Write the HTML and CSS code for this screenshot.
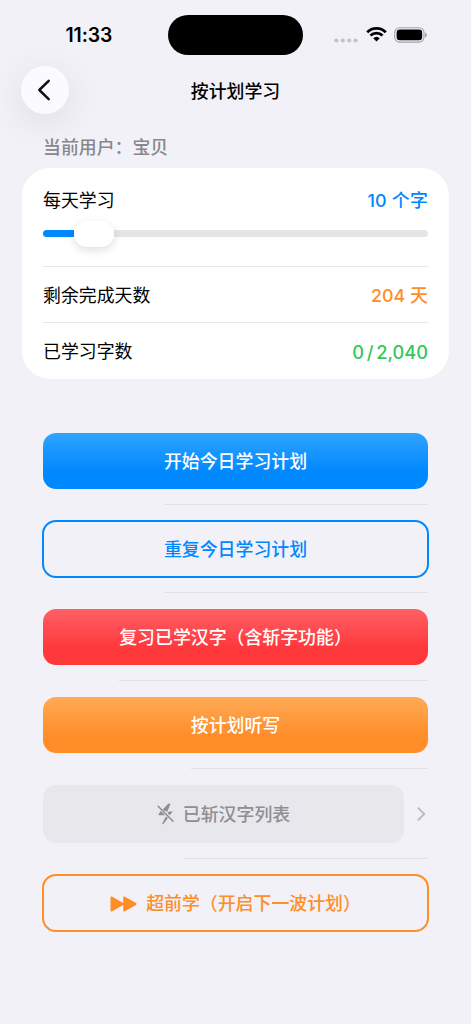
FILE: index.html
```html
<!DOCTYPE html>
<html lang="zh-CN">
<head>
<meta charset="utf-8">
<title>按计划学习</title>
<link rel="stylesheet" href="styles.css">
</head>
<body>
<div class="screen">
  <header class="status">
    <div class="time">11:33</div>
    <div class="island"></div>
    <div class="indicators">
      <svg class="dots" width="24" height="5" viewBox="0 0 24 5" fill="#c2c2c7"><circle cx="2.3" cy="2.5" r="2.1"/><circle cx="8.8" cy="2.5" r="2.1"/><circle cx="15.2" cy="2.5" r="2.1"/><circle cx="21.6" cy="2.5" r="2.1"/></svg>
      <svg class="wifi" width="21" height="16" viewBox="0 0 21 16"><g fill="none" stroke="#000" stroke-width="2.8"><path d="M1.2 6.2a13.2 13.2 0 0 1 18.6 0"/><path d="M4.5 9.6a8.6 8.6 0 0 1 12 0"/></g><path d="M10.5 15.4 7.2 12.3a4.8 4.8 0 0 1 6.6 0Z"/></svg>
      <svg class="battery" width="34" height="16" viewBox="0 0 34 16"><rect x=".7" y=".7" width="29.3" height="14.4" rx="4.8" fill="none" stroke="#a2a2a6" stroke-width="1.1"/><rect x="2.6" y="2.6" width="25.6" height="10.6" rx="3.2"/><path d="M31.2 5.4c2 .8 2 4.2 0 5Z" fill="#96969a"/></svg>
    </div>
  </header>

  <nav class="nav">
    <div class="back"><svg width="14" height="22" viewBox="0 0 14 22"><path d="M11.7 1.9 2.3 11l9.4 9.1" fill="none" stroke="#111" stroke-width="2.5" stroke-linecap="round" stroke-linejoin="round"/></svg></div>
    <h1 class="title">按计划学习</h1>
  </nav>

  <p class="user">当前用户：宝贝</p>

  <section class="card">
    <div class="daily">
      <div class="line"><span>每天学习</span><span class="value blue">10 个字</span></div>
      <div class="slider"><div class="fill"></div><div class="thumb"></div><div class="track"></div></div>
    </div>
    <div class="line row"><span>剩余完成天数</span><span class="value orange">204 天</span></div>
    <div class="line row"><span>已学习字数</span><span class="value green">0 / 2,040</span></div>
  </section>

  <main class="actions">
    <div class="btn solid-blue">开始今日学习计划</div>
    <div class="sep sep-8"></div>
    <div class="btn outline line-blue">重复今日学习计划</div>
    <div class="sep sep-8"></div>
    <div class="btn solid-red">复习已学汉字（含斩字功能）</div>
    <div class="sep sep-13"></div>
    <div class="btn solid-orange">按计划听写</div>
    <div class="sep sep-5"></div>
    <div class="link">
      <div class="btn muted">
        <svg class="bolt" width="18" height="22" viewBox="0 0 18 22"><path fill="#8e8e93" d="M12.2.8 8.1 8.3 5.9 6.2 11.2.8ZM12.4 8.5h3.4L12.8 12.3 10.2 9.7ZM3.8 8 8.2 12.3H2.2c-.8 0-1-.6-.5-1.2ZM9 13.3 10.9 15.2 6.4 20.9c-.7.8-1.5.3-1.1-.6ZM12.2.8c.6-.6 1.3-.2 1 .6L10.4 8.6H9.2L8 7.4Z"/><path d="M1.2 3.3 16 18.3" stroke="#8e8e93" stroke-width="1.5" stroke-linecap="round"/></svg>
        <span>已斩汉字列表</span>
      </div>
      <svg class="chevron" width="9" height="14" viewBox="0 0 9 14"><path d="m1.5 1.3 5.7 5.7-5.7 5.7" fill="none" stroke="#bcbcc1" stroke-width="2" stroke-linecap="round" stroke-linejoin="round"/></svg>
    </div>
    <div class="sep sep-list"></div>
    <div class="btn outline line-orange">
      <svg class="forward" width="27" height="16" viewBox="0 0 27 16" fill="#ff8d28"><path d="M.5 1.7C.5.6 1.4.2 2.3.7L13.2 6.9V1.7c0-1.1.9-1.5 1.8-1L25.7 6.8c1 .6 1 1.8 0 2.4L15 15.3c-.9.5-1.8.1-1.8-1V9.1L2.3 15.3c-.9.5-1.8.1-1.8-1Z"/></svg>
      <span>超前学（开启下一波计划）</span>
    </div>
  </main>
</div>
</body>
</html>
```

FILE: styles.css
```css
* { box-sizing: border-box; }
body {
  margin: 0;
  background: #f2f1f7;
  color: #000;
  font: 17.9px/24px Inter, "Noto Sans CJK SC", sans-serif;
}
.screen { width: 471px; height: 1024px; overflow: hidden; }

.status {
  display: grid;
  grid-template-columns: 168px 135px 168px;
  height: 66px;
  padding-top: 15px;
}
.time { padding: 8px 0 0 65.5px; font-size: 19.4px; font-weight: 600; letter-spacing: -.1px; }
.island { height: 40px; border-radius: 20px; background: #000; }
.indicators { display: flex; align-items: flex-start; padding-left: 31px; }
.dots { margin-top: 22.5px; }
.wifi { margin: 11px 0 0 7.5px; }
.battery { margin: 12px 0 0 7.5px; }

.nav {
  display: grid;
  grid-template-columns: 48px 1fr 48px;
  align-items: center;
  height: 48px;
  margin: 0 21px;
}
.back {
  display: flex;
  align-items: center;
  justify-content: center;
  width: 48px;
  height: 48px;
  padding-right: 3px;
  border-radius: 50%;
  background: #fbfaff;
  box-shadow: 0 8px 36px rgba(0, 0, 0, .09);
}
.title { margin: 0; padding-top: 3px; text-align: center; font-size: 17.9px; font-weight: 500; }
.user { margin: 22px 0 0 43px; color: #87878c; font-weight: 500; }

.card {
  height: 211px;
  margin: 8px 22px 0;
  padding: 0 21px;
  border-radius: 28px;
  background: #fff;
}
.daily { height: 98px; padding-top: 21px; }
.line { display: flex; align-items: center; justify-content: space-between; }
.row { height: 56px; padding-top: 2px; border-top: 1px solid #e6e6e7; }
.value { font-weight: 500; }
.blue { color: #08f; letter-spacing: .2px; }
.orange { color: #ff8d28; }
.green { color: #34c759; font-size: 18.2px; word-spacing: -2px; }
.slider { display: flex; align-items: center; height: 26px; margin-top: 8px; }
.fill, .track { height: 7px; margin-bottom: 1px; }
.fill { width: 31px; border-radius: 4px 0 0 4px; background: #08f; }
.thumb { width: 40px; height: 26px; border-radius: 13px; background: #fff; box-shadow: 0 3px 10px rgba(0, 0, 0, .13); z-index: 1; }
.track { flex: 1; border-radius: 0 4px 4px 0; background: #e5e5e5; }

.actions { margin: 53.5px 43px 0; }
.btn {
  display: flex;
  align-items: center;
  justify-content: center;
  height: 56.2px;
  padding-top: 2px;
  border-radius: 13px;
  font-weight: 500;
  color: #fff;
}
.solid-blue { background: linear-gradient(#2fa4ff, #08f 70%); }
.solid-red { background: linear-gradient(#ff6066, #ff383c 70%); }
.solid-orange { background: linear-gradient(#ffaa57, #ff8d28 70%); }
.outline { height: 58.2px; margin: -1px; border: 2px solid; border-radius: 14px; }
.line-blue { color: #08f; }
.line-orange { color: #ff8d28; }
.sep { height: 1px; margin: 15px 0 16px; background: #e0e0e5; }
.sep-8 { margin-left: 121px; }
.sep-13 { margin-left: 76px; }
.sep-5 { margin-left: 148px; }
.sep-list { margin-left: 140px; }
.link { display: flex; align-items: center; justify-content: space-between; padding-right: 2px; }
.muted { width: 361px; height: 58px; background: #e8e7ec; color: #8e8e93; }
.bolt { margin: -2px 8px 0 0; }
.forward { margin: -1px 9px 0 0; }
```
